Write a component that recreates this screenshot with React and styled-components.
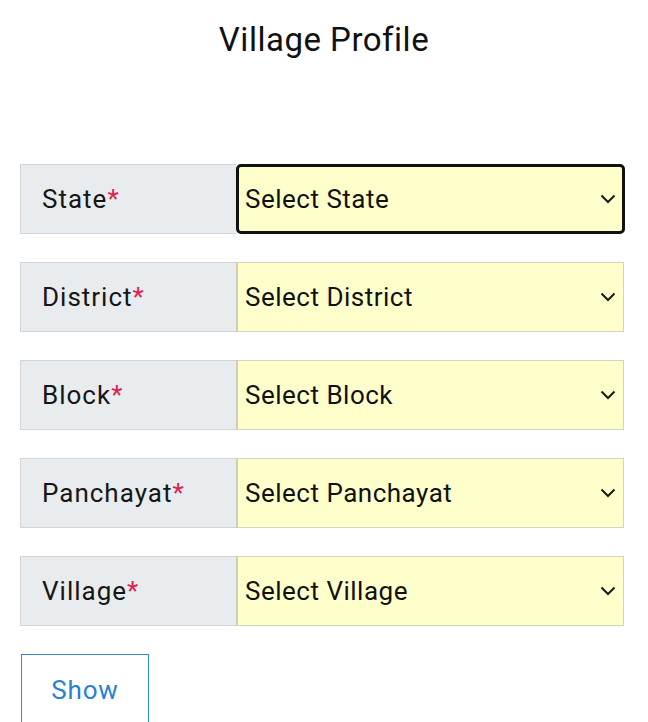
import React from "react";
import styled, { createGlobalStyle } from "styled-components";

const Global = createGlobalStyle`
  html, body { margin: 0; padding: 0; background: #fff; }
  body { font-family: Roboto, "Noto Sans", sans-serif; color: #111; }
`;

const Page = styled.div`
  width: 648px;
  height: 722px;
  overflow: hidden;
  box-sizing: border-box;
  padding: 20px 24px 0 20px;
`;

const Title = styled.h1`
  margin: 0;
  text-align: center;
  font-weight: 400;
  font-size: 33px;
  line-height: 40px;
  letter-spacing: 0.5px;
  padding-left: 4px;
`;

const Form = styled.div`
  margin-top: 104px;
  display: flex;
  flex-direction: column;
  gap: 28px;
`;

const Row = styled.div`
  display: flex;
  height: 70px;
`;

const Label = styled.div`
  width: 216px;
  box-sizing: border-box;
  background: #e9ecef;
  border: 1.5px solid #d3d6d9;
  border-right: none;
  display: flex;
  align-items: center;
  padding-left: 21px;
  font-size: 26px;
  letter-spacing: 1px;
  color: #161616;
`;

const Star = styled.span`
  color: #e0204a;
`;

const SelectWrap = styled.div`
  position: relative;
  flex: 1;
  display: flex;
`;

const Select = styled.div`
  flex: 1;
  box-sizing: border-box;
  background: #ffffcc;
  border: ${(p) => (p.$focused ? "3px solid #111" : "1.5px solid #d6d4c0")};
  border-left: ${(p) => (p.$focused ? "3px solid #111" : "2px solid #cfcdb5")};
  border-radius: ${(p) => (p.$focused ? "5px" : "0")};
  margin: ${(p) => (p.$focused ? "0 -1px 0 0" : "0")};
  display: flex;
  align-items: center;
  padding-left: ${(p) => (p.$focused ? "6px" : "7px")};
  font-size: 26px;
  letter-spacing: 0.5px;
  color: #111;
`;

const Chevron = styled.svg`
  position: absolute;
  right: 8px;
  top: 50%;
  transform: translateY(-50%);
`;

const ShowButton = styled.button`
  margin-top: 28px;
  width: 128px;
  height: 80px;
  box-sizing: border-box;
  background: #fff;
  border: 1.5px solid #2f86d6;
  color: #2a7fd4;
  font-family: Roboto, "Noto Sans", sans-serif;
  font-size: 26px;
  letter-spacing: 0.8px;
  padding: 0 0 8px 0;
  margin-left: 1px;
  display: block;
`;

const fields = [
  { label: "State", placeholder: "Select State", focused: true },
  { label: "District", placeholder: "Select District" },
  { label: "Block", placeholder: "Select Block" },
  { label: "Panchayat", placeholder: "Select Panchayat" },
  { label: "Village", placeholder: "Select Village" },
];

export default function App() {
  return (
    <Page>
      <Global />
      <Title>Village Profile</Title>
      <Form>
        {fields.map((f) => (
          <Row key={f.label}>
            <Label>
              {f.label}
              <Star>*</Star>
            </Label>
            <SelectWrap>
              <Select $focused={f.focused}>{f.placeholder}</Select>
              <Chevron width="16" height="10" viewBox="0 0 16 10">
                <path d="M1.5 1.5 L8 8 L14.5 1.5" fill="none" stroke="#1a1a1a" strokeWidth="2" />
              </Chevron>
            </SelectWrap>
          </Row>
        ))}
      </Form>
      <ShowButton>Show</ShowButton>
    </Page>
  );
}
